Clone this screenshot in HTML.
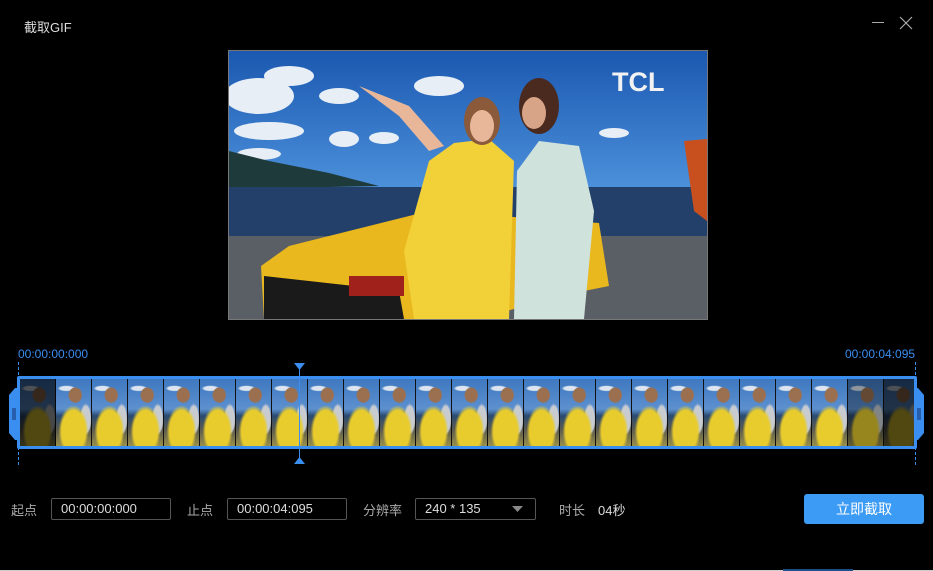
<!DOCTYPE html>
<html><head><meta charset="utf-8"><style>
body{margin:0;width:933px;height:571px;background:#000;overflow:hidden;position:relative;font-family:"Liberation Sans","Noto Sans CJK SC",sans-serif;color:#ccc}
.a{position:absolute}
.t{font-size:13px}
.fr{position:absolute;top:0;height:67px;width:35px;border-right:1px solid #111;
background:
radial-gradient(ellipse 7px 8px at 55% 24%,#9a7050 0 90%,transparent 100%),
radial-gradient(ellipse 15px 26px at 50% 78%,#e8cc2e 0 80%,transparent 100%),
radial-gradient(ellipse 6px 16px at 85% 60%,#c8ccd0 0 80%,transparent 100%),
radial-gradient(ellipse 9px 3px at 30% 14%,#dde6f0 0 70%,transparent 100%),
linear-gradient(#3f78c0 0,#5c90cf 45%,#2b4a70 55%,#5a5a50 75%,#9a8f4a 100%);}
.in{border:1px solid #555;border-radius:2px;background:#000;height:20px;font-size:13px;color:#ddd;line-height:20px;padding-left:9px;box-sizing:content-box}
</style></head><body>
<div class="a t" style="left:24px;top:17px;color:#ddd">截取GIF</div>
<div class="a" style="left:872px;top:22px;width:12px;height:1px;background:#aaa"></div>
<svg class="a" style="left:899px;top:16px" width="14" height="14"><path d="M1 1L13 13M13 1L1 13" stroke="#aaa" stroke-width="1.2"/></svg>

<div class="a" style="left:228px;top:50px;width:478px;height:268px;border:1px solid #777;overflow:hidden">
<svg width="478" height="268">
<defs><linearGradient id="s" x1="0" y1="0" x2="0" y2="1"><stop offset="0" stop-color="#1b58b0"/><stop offset="1" stop-color="#4d92dc"/></linearGradient></defs>
<rect width="478" height="140" fill="url(#s)"/>
<g fill="#e8eef6"><ellipse cx="30" cy="45" rx="35" ry="18"/><ellipse cx="60" cy="25" rx="25" ry="10"/><ellipse cx="40" cy="80" rx="35" ry="9"/><ellipse cx="110" cy="45" rx="20" ry="8"/><ellipse cx="210" cy="35" rx="25" ry="10"/><ellipse cx="115" cy="88" rx="15" ry="8"/><ellipse cx="155" cy="87" rx="15" ry="6"/><ellipse cx="385" cy="82" rx="15" ry="5"/><ellipse cx="30" cy="103" rx="22" ry="6"/></g>
<path d="M0 100 L40 110 L100 122 L150 135 L0 138Z" fill="#1f3a3a"/>
<rect y="136" width="478" height="60" fill="#22406a"/>
<rect y="185" width="478" height="83" fill="#5a5f66"/>
<path d="M35 268 L32 215 L60 195 L200 160 L370 172 L380 235 L330 245 L250 268Z" fill="#e9b81e"/>
<path d="M35 225 L170 240 L175 268 L35 268Z" fill="#1a1a1a"/>
<rect x="120" y="225" width="55" height="20" fill="#a0201c"/>
<path d="M185 268 L175 200 L200 110 L225 92 L260 88 L285 110 L280 268Z" fill="#f1d038"/>
<ellipse cx="253" cy="70" rx="18" ry="24" fill="#8a5a3a"/><ellipse cx="253" cy="75" rx="12" ry="16" fill="#e8b79a"/>
<path d="M130 35 L180 55 L215 95 L200 100 L170 65Z" fill="#e8b79a"/>
<path d="M285 268 L288 120 L310 90 L350 95 L365 160 L355 268Z" fill="#cfe2dc"/>
<ellipse cx="310" cy="55" rx="20" ry="28" fill="#4a2a1e"/><ellipse cx="305" cy="62" rx="12" ry="16" fill="#d8a488"/>
<path d="M455 90 L478 88 L478 170 L465 160Z" fill="#c8501e"/>
<text x="383" y="40" font-family="Liberation Sans" font-weight="bold" font-size="27" fill="#f2f2f2">TCL</text>
</svg></div>

<div class="a" style="left:18px;top:347px;font-size:12px;color:#3a8ef0">00:00:00:000</div>
<div class="a" style="left:845px;top:347px;font-size:12px;color:#3a8ef0">00:00:04:095</div>
<div class="a" style="left:18px;top:362px;height:103px;border-left:1px dashed #3a8ef0"></div>
<div class="a" style="left:915px;top:362px;height:103px;border-left:1px dashed #3a8ef0"></div>

<div class="a" style="left:17px;top:376px;width:894px;height:67px;border:3px solid #3a8ef0;border-radius:2px;overflow:hidden;background:#111">
<div style="position:relative">
<div class="fr" style="left:0;filter:brightness(.35)"></div><div class="fr" style="left:36px"></div><div class="fr" style="left:72px"></div><div class="fr" style="left:108px"></div><div class="fr" style="left:144px"></div><div class="fr" style="left:180px"></div><div class="fr" style="left:216px"></div><div class="fr" style="left:252px"></div><div class="fr" style="left:288px"></div><div class="fr" style="left:324px"></div><div class="fr" style="left:360px"></div><div class="fr" style="left:396px"></div><div class="fr" style="left:432px"></div><div class="fr" style="left:468px"></div><div class="fr" style="left:504px"></div><div class="fr" style="left:540px"></div><div class="fr" style="left:576px"></div><div class="fr" style="left:612px"></div><div class="fr" style="left:648px"></div><div class="fr" style="left:684px"></div><div class="fr" style="left:720px"></div><div class="fr" style="left:756px"></div><div class="fr" style="left:792px"></div><div class="fr" style="left:828px;filter:brightness(.65)"></div><div class="fr" style="left:864px;filter:brightness(.35)"></div>
</div></div>
<svg class="a" style="left:6px;top:388px" width="12" height="52"><path d="M12 0 L12 52 L9 52 L3 45 L3 7 L9 0Z" fill="#3a8ef0"/><path d="M7 20V32M9 20V32" stroke="#14306a" stroke-width="1"/></svg>
<svg class="a" style="left:915px;top:388px" width="12" height="52"><path d="M0 0 L0 52 L3 52 L9 45 L9 7 L3 0Z" fill="#3a8ef0"/><path d="M3 20V32M5 20V32" stroke="#14306a" stroke-width="1"/></svg>
<div class="a" style="left:299px;top:368px;width:1px;height:92px;background:#3a8ef0"></div>
<svg class="a" style="left:294px;top:363px" width="11" height="8"><path d="M0 0H11L5.5 7Z" fill="#3a8ef0"/></svg>
<svg class="a" style="left:294px;top:456px" width="11" height="8"><path d="M0 8H11L5.5 1Z" fill="#3a8ef0"/></svg>

<div class="a t" style="left:11px;top:500px;color:#aaa">起点</div>
<div class="a in" style="left:51px;top:498px;width:109px">00:00:00:000</div>
<div class="a t" style="left:187px;top:500px;color:#aaa">止点</div>
<div class="a in" style="left:227px;top:498px;width:109px">00:00:04:095</div>
<div class="a t" style="left:363px;top:500px;color:#aaa">分辨率</div>
<div class="a in" style="left:415px;top:498px;width:110px">240 * 135</div>
<svg class="a" style="left:512px;top:506px" width="11" height="7"><path d="M0 0H11L5.5 6Z" fill="#888"/></svg>
<div class="a t" style="left:559px;top:500px;color:#aaa">时长</div>
<div class="a t" style="left:598px;top:500px;color:#ddd">04秒</div>
<div class="a" style="left:804px;top:494px;width:120px;height:30px;background:#3c9bf5;border-radius:3px;color:#fff;font-size:14px;text-align:center;line-height:30px">立即截取</div>
<div class="a" style="left:0;top:570px;width:933px;height:1px;background:#ccc"></div>
<div class="a" style="left:783px;top:569px;width:70px;height:2px;background:#1c4f8a"></div>
</body></html>
